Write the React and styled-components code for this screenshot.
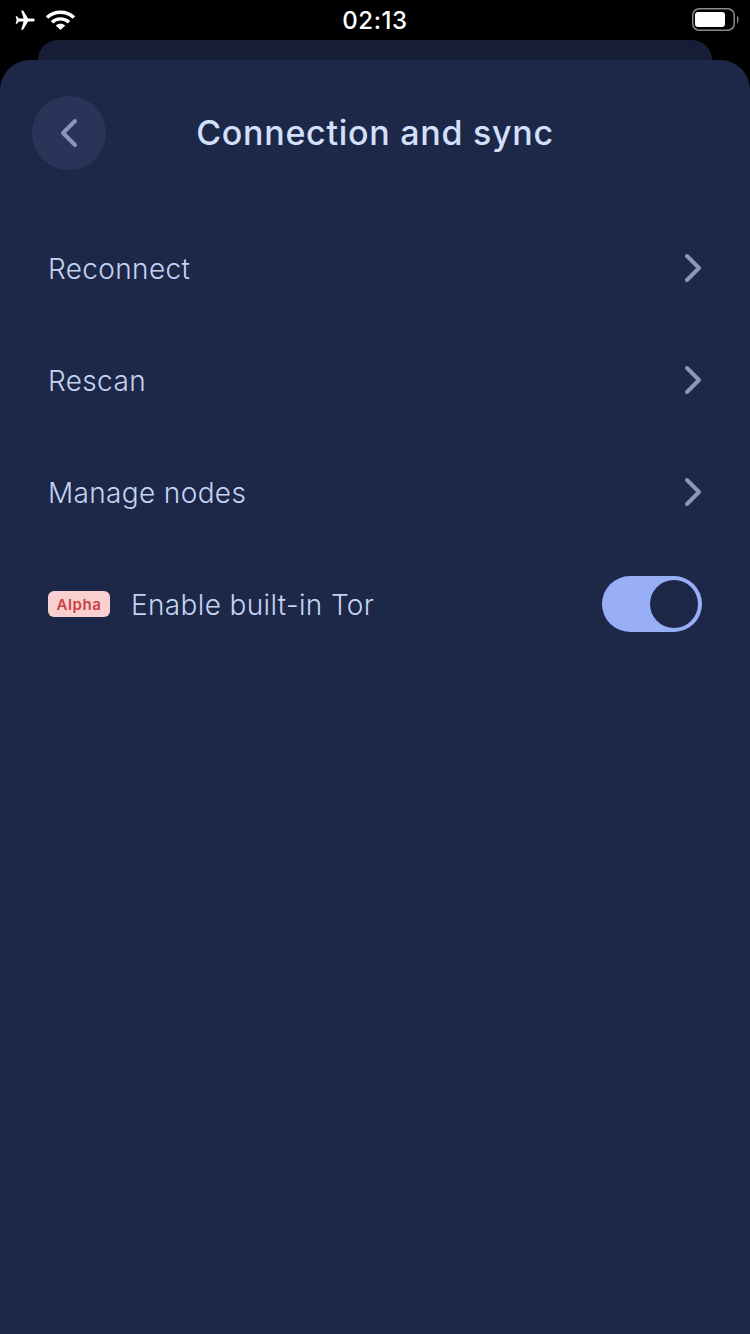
import React from "react";
import styled, { createGlobalStyle } from "styled-components";

const GlobalStyle = createGlobalStyle`
  html, body {
    margin: 0;
    background: #000;
    font-family: "Inter", "Liberation Sans", sans-serif;
  }
`;

const Screen = styled.div`
  width: 750px;
  height: 1334px;
  display: flex;
  flex-direction: column;
  background: #000;
  overflow: hidden;
`;

const StatusBar = styled.div`
  height: 40px;
  padding: 0 12px;
  display: grid;
  grid-template-columns: 1fr auto 1fr;
  align-items: center;
  color: #fff;
`;

const StatusLeft = styled.div`
  display: flex;
  align-items: center;
  gap: 8px;
  margin-left: 1px;
`;

const StatusRight = styled.div`
  display: flex;
  justify-content: flex-end;
  align-items: center;
  margin-right: -2px;
`;

const Clock = styled.div`
  font-family: "Inter", sans-serif;
  font-size: 24px;
  font-weight: 500;
  letter-spacing: 0.6px;
`;

const BackSheet = styled.div`
  height: 20px;
  margin: 0 38px;
  flex: none;
  border-radius: 20px 20px 0 0;
  background: #161d36;
`;

const Sheet = styled.main`
  flex: 1;
  border-radius: 30px 30px 0 0;
  background: #1d2748;
`;

const Header = styled.header`
  height: 74px;
  margin-top: 36px;
  padding: 0 32px;
  position: relative;
  display: flex;
  align-items: center;
  justify-content: center;
`;

const BackButton = styled.div`
  position: absolute;
  left: 32px;
  top: 0;
  width: 74px;
  height: 74px;
  border-radius: 50%;
  background: #2a3459;
  display: flex;
  align-items: center;
  justify-content: center;
`;

const Title = styled.h1`
  margin: 0;
  padding-bottom: 2px;
  font-size: 34px;
  font-weight: 500;
  letter-spacing: 0.72px;
  color: #d3e0fb;
`;

const List = styled.div`
  margin-top: 42px;
  padding: 0 48px;
  display: flex;
  flex-direction: column;
`;

const Row = styled.div`
  height: 112px;
  display: flex;
  align-items: center;
  justify-content: space-between;
`;

const RowLabel = styled.span`
  padding-top: 2px;
  font-size: 28px;
  font-weight: 300;
  letter-spacing: 0.35px;
  color: #c5d3f2;
`;

const RowStart = styled.div`
  display: flex;
  align-items: center;
  gap: 21px;
`;

const Badge = styled.span`
  width: 62px;
  height: 26px;
  border-radius: 6px;
  background: #f9cfd0;
  color: #c93f42;
  font-size: 15px;
  font-weight: 600;
  letter-spacing: 0.6px;
  display: flex;
  align-items: center;
  justify-content: center;
`;

const Toggle = styled.div`
  width: 100px;
  height: 56px;
  box-sizing: border-box;
  padding: 4px;
  border-radius: 28px;
  background: #98aff8;
  display: flex;
  justify-content: flex-end;
`;

const Knob = styled.div`
  width: 48px;
  height: 48px;
  border-radius: 50%;
  background: #1d2748;
`;

function Chevron({ flip }) {
  return (
    <svg width="18" height="30" viewBox="0 0 18 30" fill="none" style={flip ? { transform: "scaleX(-1)" } : undefined}>
      <path d="M3 3 L15 15 L3 27" stroke="#8a97b8" strokeWidth="4" strokeLinecap="round" strokeLinejoin="round" />
    </svg>
  );
}

const rows = ["Reconnect", "Rescan", "Manage nodes"];

export default function App() {
  return (
    <Screen>
      <GlobalStyle />
      <StatusBar>
        <StatusLeft>
          <svg width="24" height="22" viewBox="0 0 24 24" fill="#fff">
            <path d="M22.6 12c0-1-.9-1.7-2-1.7h-5.2L9.9 1.5H7.8l2.7 8.8H5.2L3.4 8H1.8l1.1 4-1.1 4h1.6l1.8-2.3h5.3l-2.7 8.8h2.1l5.5-8.8h5.2c1.1 0 2-.7 2-1.7z" />
          </svg>
          <svg width="31" height="22" viewBox="0 0 31 22" fill="none">
            <path d="M2 8.5 C9.5 1.5 21.5 1.5 29 8.5" stroke="#fff" strokeWidth="3.6" />
            <path d="M7 13.2 C11.8 8.8 19.2 8.8 24 13.2" stroke="#fff" strokeWidth="3.4" />
            <path d="M15.5 21 L10.8 16.4 C13.4 14.2 17.6 14.2 20.2 16.4 Z" fill="#fff" />
          </svg>
        </StatusLeft>
        <Clock>02:13</Clock>
        <StatusRight>
          <svg width="48" height="24" viewBox="0 0 48 24" fill="none">
            <rect x="0.75" y="0.75" width="41.5" height="21.5" rx="6.5" stroke="#8a8a8a" strokeWidth="1.5" />
            <rect x="3" y="4" width="30" height="15" rx="3" fill="#fff" />
            <path d="M45 7.5 C47 9 47 14 45 15.5 Z" fill="#8a8a8a" />
          </svg>
        </StatusRight>
      </StatusBar>
      <BackSheet />
      <Sheet>
        <Header>
          <BackButton>
            <Chevron flip />
          </BackButton>
          <Title>Connection and sync</Title>
        </Header>
        <List>
          {rows.map((label) => (
            <Row key={label}>
              <RowLabel>{label}</RowLabel>
              <Chevron />
            </Row>
          ))}
          <Row>
            <RowStart>
              <Badge>Alpha</Badge>
              <RowLabel>Enable built-in Tor</RowLabel>
            </RowStart>
            <Toggle>
              <Knob />
            </Toggle>
          </Row>
        </List>
      </Sheet>
    </Screen>
  );
}
